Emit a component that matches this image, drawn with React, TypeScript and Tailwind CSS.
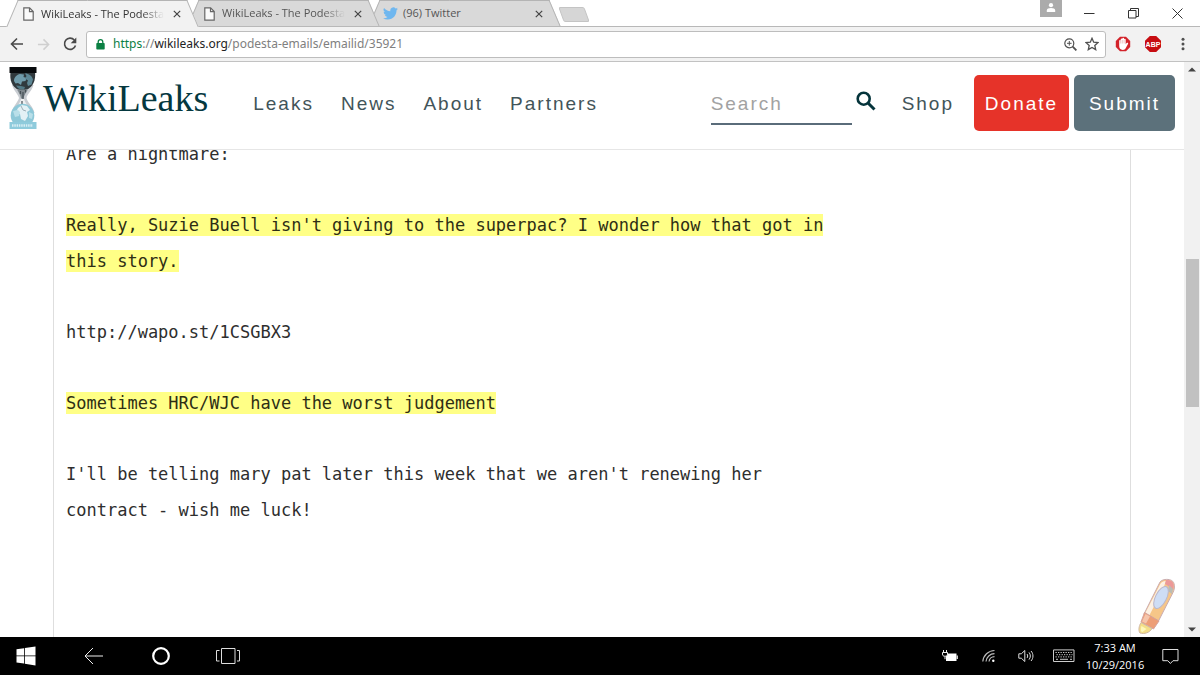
import type { ReactNode } from "react";

type TabProps = { title: string; icon: ReactNode; active?: boolean; fade?: boolean; layer: string };

function PageIcon() {
  return (
    <svg viewBox="0 0 11 14" className="h-[14px] w-[11px]" fill="none" stroke="#666" strokeWidth="1.2" aria-hidden="true">
      <path d="M.8.8h5.8l3.6 3.7v8.7H.8z" fill="#fafafa" />
      <path d="M6.5 1v3.6h3.6" />
    </svg>
  );
}

function TwitterIcon() {
  return (
    <svg viewBox="0 0 24 24" className="h-[15px] w-[15px]" fill="#6fb7ef" aria-hidden="true">
      <path d="M23.95 4.57a10 10 0 0 1-2.82.77 4.96 4.96 0 0 0 2.16-2.72c-.95.55-2 .95-3.13 1.18a4.92 4.92 0 0 0-8.38 4.48C7.69 8.1 4.07 6.13 1.64 3.16a4.92 4.92 0 0 0 1.52 6.57 4.9 4.9 0 0 1-2.23-.61v.06a4.92 4.92 0 0 0 3.95 4.83 5 5 0 0 1-2.21.08 4.94 4.94 0 0 0 4.6 3.42A9.87 9.87 0 0 1 0 19.54a13.99 13.99 0 0 0 7.55 2.21c9.05 0 14-7.5 14-13.98l-.02-.64a9.94 9.94 0 0 0 2.42-2.56z" />
    </svg>
  );
}

function Tab({ title, icon, active, fade, layer }: TabProps) {
  const fill = active
    ? "h-[27px] before:bg-[#f2f2f2] after:bg-[#f2f2f2]"
    : "h-[26px] before:bg-[#d9d9d9] after:bg-[#d9d9d9]";
  return (
    <div
      className={`relative isolate -ml-3 w-[193px] shrink-0 before:absolute before:inset-y-0 before:left-[6px] before:-z-10 before:w-[100px] before:-skew-x-[23deg] before:border-t before:border-l before:border-[#b4b4b4] before:content-[''] after:absolute after:inset-y-0 after:right-[6px] after:-z-10 after:w-[100px] after:skew-x-[23deg] after:border-t after:border-r after:border-[#b4b4b4] after:content-[''] ${fill} ${layer}`}
    >
      <div className="flex h-full items-center pt-px pr-[18px] pl-[14px]">
        <button className="flex min-w-0 flex-1 items-center gap-[5px] text-left">
          <span className="flex w-4 shrink-0 justify-center">{icon}</span>
          <span
            className={`text-[11px] whitespace-nowrap ${active ? "text-[#333]" : "text-[#555]"} ${fade ? "[mask-image:linear-gradient(to_right,black_82%,transparent)]" : ""}`}
          >
            {title}
          </span>
        </button>
        <button aria-label={`Close ${title}`} className="shrink-0">
          <svg viewBox="0 0 8 8" className="h-[8px] w-[8px]" stroke="#444" strokeWidth="1.2" aria-hidden="true">
            <path d="M.8.8l6.4 6.4M7.2.8L.8 7.2" />
          </svg>
        </button>
      </div>
    </div>
  );
}

function TabStrip() {
  return (
    <div className="flex h-[27px] border-b border-[#b8b8b8] bg-white pl-[18px]">
      <Tab title="WikiLeaks - The Podesta" icon={<PageIcon />} active fade layer="z-30" />
      <Tab title="WikiLeaks - The Podesta" icon={<PageIcon />} fade layer="z-20" />
      <Tab title="(96) Twitter" icon={<TwitterIcon />} layer="z-10" />
      <button aria-label="New tab" className="mt-[7px] h-[15px] w-[26px] shrink-0 skew-x-[20deg] rounded-[2px] border border-[#c4c4c4] bg-[#d6d6d6]" />
      <div className="ml-auto flex">
        <button aria-label="Profile" className="flex h-[17px] w-[22px] justify-center bg-[#ababab] pt-[3px]">
          <svg viewBox="0 0 10 9" className="h-[9px] w-[10px]" fill="#fff" aria-hidden="true">
            <circle cx="5" cy="2.2" r="2.1" />
            <path d="M.8 9V7.4C.8 5.8 2.8 5 5 5s4.2.8 4.2 2.4V9z" />
          </svg>
        </button>
        <div className="flex h-[26px] items-center gap-[33px] pr-[17px] pl-[22px]">
          <button aria-label="Minimize">
            <svg viewBox="0 0 11 11" className="h-[11px] w-[11px]" stroke="#333" aria-hidden="true"><path d="M0 5.5h10.5" /></svg>
          </button>
          <button aria-label="Restore">
            <svg viewBox="0 0 11 11" className="h-[11px] w-[11px]" fill="none" stroke="#333" aria-hidden="true">
              <path d="M.5 2.5h7.500v7.500h-7.500zM2.500 2.500v-2h8v8h-2.500" />
            </svg>
          </button>
          <button aria-label="Close window">
            <svg viewBox="0 0 11 11" className="h-[11px] w-[11px]" stroke="#333" aria-hidden="true"><path d="M.5.5l10 10M10.500.5l-10 10" /></svg>
          </button>
        </div>
      </div>
    </div>
  );
}

function Toolbar() {
  return (
    <div className="flex h-[35px] items-center border-b border-[#c2c2c2] bg-[#f2f2f2] pl-[10px]">
      <div className="flex w-[76px] shrink-0 items-center gap-[13px]">
        <button aria-label="Back">
          <svg viewBox="0 0 14 14" className="h-[14px] w-[14px]" fill="none" stroke="#4a4a4a" strokeWidth="1.6" aria-hidden="true"><path d="M13 7H1.500M7 1.500L1.500 7 7 12.500" /></svg>
        </button>
        <button aria-label="Forward" disabled>
          <svg viewBox="0 0 14 14" className="h-[13px] w-[13px]" fill="none" stroke="#cfcfcf" strokeWidth="1.6" aria-hidden="true"><path d="M1 7h11.500M7 1.500L12.500 7 7 12.500" /></svg>
        </button>
        <button aria-label="Reload">
          <svg viewBox="0 0 14 14" className="h-[14px] w-[14px]" fill="none" aria-hidden="true">
            <path d="M11.300 3A5.600 5.600 0 1 0 12.500 8.400" stroke="#4a4a4a" strokeWidth="1.6" />
            <path d="M13.300.6v5.600H7.700z" fill="#4a4a4a" />
          </svg>
        </button>
      </div>
      <div className="flex h-[27px] min-w-0 flex-1 items-center rounded-[3px] border border-[#bdbdbd] bg-white px-[9px]">
        <svg viewBox="0 0 9 11" className="mr-[8px] h-[11px] w-[9px] shrink-0" aria-hidden="true">
          <rect x=".3" y="4" width="8.400" height="6.500" rx=".8" fill="#0b8043" />
          <path d="M2.200 4.500V3a2.300 2.300 0 0 1 4.600 0v1.500" fill="none" stroke="#0b8043" strokeWidth="1.300" />
        </svg>
        <div className="flex-1 font-['Noto_Sans','Open_Sans',sans-serif] text-[12px] whitespace-nowrap text-[#808080]">
          <span className="text-[#0b8043]">https</span>://<span className="text-[#222]">wikileaks.org</span>/podesta-emails/emailid/35921
        </div>
        <div className="flex items-center gap-2">
          <button aria-label="Zoom level">
            <svg viewBox="0 0 13 13" className="h-[13px] w-[13px]" fill="none" stroke="#505050" aria-hidden="true">
              <circle cx="5.300" cy="5.300" r="4.500" strokeWidth="1.200" />
              <path d="M3 5.300h4.600M5.300 3v4.600" />
              <path d="M8.700 8.700l3.700 3.700" strokeWidth="1.800" />
            </svg>
          </button>
          <button aria-label="Bookmark this page" className="-mr-[3px]">
            <svg viewBox="0 0 14 14" className="h-[14px] w-[14px]" fill="none" stroke="#505050" strokeWidth="1.300" aria-hidden="true">
              <path d="M7 1.300l1.700 3.900 4.300.4-3.200 2.800.9 4.200L7 10.400l-3.700 2.200.9-4.200L1 5.600l4.300-.4z" />
            </svg>
          </button>
        </div>
      </div>
      <div className="flex shrink-0 items-center pr-[15px] pl-[9px]">
        <button aria-label="Ad blocker">
          <svg viewBox="0 0 16 16" className="h-[16px] w-[16px]" aria-hidden="true">
            <path d="M5 .8h6L15.200 5v6L11 15.200H5L.8 11V5z" fill="#d3222a" />
            <path d="M4.200 8.500V4.700c0-1.100 1.500-1.100 1.500 0V3.300c0-1.200 1.600-1.200 1.600 0V2.600c0-1.200 1.800-1.200 1.800 0v1c0-1.200 1.600-1.200 1.600 0v4.700l.9-1.200c.8-.9 2-.2 1.400.8l-2.500 4.700c-.6 1-1.300 1.400-2.600 1.400-2.700 0-3.700-1.600-3.700-3.900z" fill="#fff" />
            <path d="M5.700 4.500v3M7.300 4v3.500M9.100 4v3.500" stroke="#dc8c8f" strokeWidth=".5" />
          </svg>
        </button>
        <button aria-label="Adblock Plus" className="ml-[14px]">
          <span className="flex h-[16px] w-[16px] items-center justify-center bg-[#c70d12] font-['Liberation_Sans',Arial,sans-serif] text-[7px] leading-none font-bold text-white [clip-path:polygon(30%_0,70%_0,100%_30%,100%_70%,70%_100%,30%_100%,0_70%,0_30%)]">
            ABP
          </span>
        </button>
        <button aria-label="Menu" className="ml-[20px]">
          <svg viewBox="0 0 4 14" className="h-[14px] w-[4px]" fill="#505050" aria-hidden="true">
            <circle cx="2" cy="2.200" r="1.500" /><circle cx="2" cy="7" r="1.500" /><circle cx="2" cy="11.800" r="1.500" />
          </svg>
        </button>
      </div>
    </div>
  );
}

function Hourglass() {
  return (
    <svg viewBox="0 0 28 62" className="h-[62px] w-[28px] shrink-0" aria-hidden="true">
      <path d="M3 18c2 6 6 9 7 13-1 4-6 8-7.500 15h23C24 39 18 35 17.500 31c.5-4 5.500-7 7-13z" fill="#c9cdd2" />
      <path d="M12 32h3c1 4 5 8 6 12l-8 6-7-4c0-5 5-9 6-14z" fill="#eef0f1" />
      <path d="M1.500 5h24.500c1 8-2 15-8 17.500-3 1-6 1-9 0C3 20 .5 13 1.500 5z" fill="#30393d" />
      <path d="M5 14c0-4 3-6.500 6-7l4 .5-.5 2.500 3 1-1 3-3.500.5-1 3.500-3-2-2.500.5z" fill="#6f9baa" />
      <path d="M16 6.500c4 0 7 2.500 8 6l-1.500 5-3.500 1.500-1-3 1-2.500-3-2 1.500-2.500z" fill="#5d8795" />
      <path d="M7 18.500l5 .5 4 1-1 2.500c-3 .5-6-.5-8-4z" fill="#527985" />
      <path d="M8 22.500c1.500 3 3.500 5 4 9h2.500c.5-3 2.500-6 4.500-9z" fill="#7d868c" />
      <path d="M11.500 24v3M14 25v7M13 34v4M16.500 23v2.500" stroke="#454f55" strokeWidth="1.200" />
      <circle cx="13.500" cy="48.500" r="11.800" fill="#8ec8d8" />
      <path d="M13 38l5 1 3 4-3 2 1 4-3 5-4-2-1-5-4-2 2-4z" fill="#e3f1f5" />
      <path d="M4 44l5-1 2 2-1 4-4 1zM20 45l4 2-1 5-3-1z" fill="#b9dfe9" />
      <path d="M12 39l2 4 3 1" fill="none" stroke="#9fb0b8" />
      <rect x=".5" y="0" width="27" height="6" fill="#080b0d" />
      <rect x=".5" y="55" width="27" height="7" fill="#8fcbdc" />
      <path d="M3 58.500h21" stroke="#d8eef4" strokeWidth="2.500" strokeDasharray="1.500 .8" />
    </svg>
  );
}

function SiteHeader() {
  return (
    <header className="relative z-10 flex h-[88px] shrink-0 border-b border-[#e6e6e6] bg-white pl-[9px] font-['Liberation_Sans',Arial,sans-serif] text-[19px] tracking-[2px] text-[#425459]">
      <a href="#home" className="mt-[5px] flex h-[62px] items-center gap-[6px] font-['Liberation_Serif',Georgia,serif] text-[38px] tracking-normal text-[#05383f]">
        <Hourglass />
        WikiLeaks
      </a>
      <nav className="mt-[13px] ml-[45px] flex h-[56px] items-center gap-[27px] pt-[2px]">
        <a href="#leaks">Leaks</a>
        <a href="#news">News</a>
        <a href="#about">About</a>
        <a href="#partners">Partners</a>
      </nav>
      <div className="mt-[13px] ml-auto flex h-[56px] items-center pr-[9px]">
        <input
          type="search"
          aria-label="Search"
          placeholder="Search"
          className="h-[50px] w-[141px] self-start border-b-2 border-[#5a6c7a] bg-transparent pt-[9px] tracking-[2px] outline-none placeholder:text-[#a2a2a2]"
        />
        <button aria-label="Search" className="mb-[5px] ml-[4px]">
          <svg viewBox="0 0 20 20" className="h-[20px] w-[20px]" fill="none" stroke="#05343b" aria-hidden="true">
            <circle cx="7.700" cy="7.700" r="6" strokeWidth="2.600" />
            <path d="M12 12l6.500 6.500" strokeWidth="3" />
          </svg>
        </button>
        <a href="#shop" className="ml-[26px] pt-[2px]">Shop</a>
        <a href="#donate" className="ml-[20px] flex h-full w-[95px] items-center justify-center rounded-[5px] bg-[#e63329] pt-[2px] text-white">Donate</a>
        <a href="#submit" className="ml-[5px] flex h-full w-[101px] items-center justify-center rounded-[5px] bg-[#5c717b] pt-[2px] text-white">Submit</a>
      </div>
    </header>
  );
}

function Email() {
  return (
    <article className="mx-[53px] min-h-0 flex-1 overflow-hidden border-x border-[#dedede] pl-[12px]">
      <div className="-mt-[14px] flex max-w-[780px] flex-col gap-[35px] font-['DejaVu_Sans_Mono',monospace] text-[17px] leading-9 text-[#2e2e2e]">
        <p>Are a nightmare:</p>
        <p><mark className="bg-[#ffff86] py-px text-[#2e2e14]">Really, Suzie Buell isn't giving to the superpac? I wonder how that got in this story.</mark></p>
        <p>http://wapo.st/1CSGBX3</p>
        <p><mark className="bg-[#ffff86] py-px text-[#2e2e14]">Sometimes HRC/WJC have the worst judgement</mark></p>
        <p>I'll be telling mary pat later this week that we aren't renewing her contract - wish me luck!</p>
      </div>
    </article>
  );
}

function Highlighter() {
  return (
    <button aria-label="Highlighter" className="absolute right-[8px] bottom-[2px] opacity-90">
      <svg viewBox="0 0 39 57" className="h-[57px] w-[39px]" aria-hidden="true">
        <g strokeLinejoin="round">
          <path d="M22 6c1-3 3-4 6-4.500 4-.5 8 .5 9 4 .8 3 .5 6-1 9L21 44 7 36z" fill="#f6c07c" stroke="#c3a2a8" />
          <path d="M23 6.500c1-2 3-3.500 6-3.500l-3 8L12 38l-4-2.500z" fill="#fdf0e0" />
          <path d="M29 2c4-.3 7 1 7.500 4 .3 2 .2 4-.5 6l-3-3-5-3z" fill="#eb8f8e" />
          <path d="M32 7l4 4-1 5-4-3z" fill="#b3b5ae" />
          <path d="M7.500 34.500L22 43l-5.500 8L4 44z" fill="#ec9468" stroke="#cf9a93" />
          <path d="M8.500 36l4.500 2.500-4 7-4-2z" fill="#f6bfa2" />
          <path d="M4 44.500l11 6c-2 4-8 6-12 4.500-2-2.500-1-7 1-10.500z" fill="#f3db7b" stroke="#ccb09a" />
          <path d="M4.500 48l5 3-4 3c-2 0-2-3-1-6z" fill="#fdf7b4" />
          <ellipse cx="24" cy="19.500" rx="5.500" ry="12" transform="rotate(27 24 19.500)" fill="#c9daf5" stroke="#b4b0c6" />
        </g>
      </svg>
    </button>
  );
}

function ScrollBar() {
  return (
    <div className="flex w-[16px] shrink-0 flex-col items-center bg-[#f1f1f1] py-[5px]">
      <svg viewBox="0 0 8 5" className="h-[5px] w-[8px]" fill="#444" aria-hidden="true"><path d="M0 4.500L4 .5l4 4z" /></svg>
      <div className="flex w-full flex-1 flex-col items-center">
        <div className="grow-[187]" />
        <div className="w-[13px] grow-[149] bg-[#c1c1c1]" />
        <div className="grow-[220]" />
      </div>
      <svg viewBox="0 0 8 5" className="h-[5px] w-[8px]" fill="#444" aria-hidden="true"><path d="M0 .5l4 4 4-4z" /></svg>
    </div>
  );
}

function Taskbar() {
  return (
    <footer className="flex h-[38px] shrink-0 items-center justify-between bg-black text-white">
      <div className="flex items-center pl-[16px]">
        <button aria-label="Start">
          <svg viewBox="0 0 20 20" className="h-[20px] w-[20px]" fill="#fff" aria-hidden="true">
            <path d="M.5 3.200l7.500-1v7.300H.5zM8.800 2.100L19.500.6v8.900H8.800zM.5 10.300H8v7.300l-7.500-1zM8.800 10.300h10.700v9.100L8.800 17.800z" />
          </svg>
        </button>
        <button aria-label="Back" className="ml-[48px]">
          <svg viewBox="0 0 20 18" className="h-[18px] w-[20px]" fill="none" stroke="#eee" aria-hidden="true"><path d="M19 9H1M9 1L1 9l8 8" /></svg>
        </button>
        <button aria-label="Cortana" className="ml-[47px]">
          <svg viewBox="0 0 20 20" className="h-[20px] w-[20px]" fill="none" stroke="#fff" strokeWidth="2.200" aria-hidden="true"><circle cx="10" cy="10" r="7.800" /></svg>
        </button>
        <button aria-label="Task view" className="ml-[45px]">
          <svg viewBox="0 0 24 16" className="h-[16px] w-[24px]" fill="none" stroke="#ddd" aria-hidden="true">
            <path d="M5.500.5h13.500v15H5.500zM3.500 2.500h-3v10.500h3M21 2.500h2.500v10.500H21" />
          </svg>
        </button>
      </div>
      <div className="flex items-center pr-[21px]">
        <svg viewBox="0 0 16 12" className="h-[12px] w-[16px]" role="img" aria-label="Battery charging">
          <path d="M4 3.500h10.500v7.500H4z" fill="#fff" />
          <path d="M14.500 5.500h1.500v3.500h-1.500z" fill="#ccc" />
          <path d="M.5 2.500h5v1.500c0 1.500-.8 2.200-2 2.200h-1C1.300 6.200.5 5.500.5 4zM1.500 0v2.500M4.500 0v2.500M3 6.200v3" stroke="#eee" fill="#000" />
        </svg>
        <svg viewBox="0 0 14 14" className="ml-[24px] h-[14px] w-[14px]" fill="none" stroke="#bbb" strokeWidth="1.200" role="img" aria-label="Wi-Fi">
          <path d="M.8 12.500A12 12 0 0 1 12.500 1.500M4 12.500a8.500 8.500 0 0 1 8.500-7.800M7 12.500a5.500 5.500 0 0 1 5.500-4.800" />
          <circle cx="11.300" cy="11.800" r="1.200" fill="#fff" stroke="none" />
        </svg>
        <svg viewBox="0 0 16 14" className="ml-[22px] h-[14px] w-[16px]" fill="none" stroke="#ddd" role="img" aria-label="Volume">
          <path d="M.8 4.800h2.500L6.800 1.500v11L3.300 9.200H.8zM9 5c.9 1 .9 3 0 4M11 3.400c1.800 2 1.800 5.200 0 7.200M13 2c2.600 2.800 2.600 7.200 0 10" />
        </svg>
        <svg viewBox="0 0 22 14" className="ml-[19px] h-[14px] w-[22px]" fill="none" stroke="#ccc" role="img" aria-label="Touch keyboard">
          <path d="M.5.9h20.500v11.600H.5z" />
          <path d="M2.500 3.500h17M3.500 5.700h16M2.500 7.900h17" strokeDasharray="1.300 1.200" />
          <path d="M3 10.300h2M7 10.300h8M17 10.300h2" />
        </svg>
        <div className="ml-[9px] w-[62px] text-center text-[11px] leading-[17px] whitespace-nowrap">
          <div>7:33 AM</div>
          <div>10/29/2016</div>
        </div>
        <button aria-label="Notifications" className="ml-[16px]">
          <svg viewBox="0 0 17 17" className="h-[17px] w-[17px]" fill="none" stroke="#ddd" aria-hidden="true"><path d="M.8 1.500h15.200v11.200H11L8.400 15.500 5.800 12.700h-5z" /></svg>
        </button>
      </div>
    </footer>
  );
}

export default function App() {
  return (
    <div className="flex h-screen flex-col overflow-hidden bg-white font-['Open_Sans','Noto_Sans',sans-serif]">
      <TabStrip />
      <Toolbar />
      <div className="flex min-h-0 flex-1">
        <main className="relative flex min-w-0 flex-1 flex-col">
          <SiteHeader />
          <Email />
          <Highlighter />
        </main>
        <ScrollBar />
      </div>
      <Taskbar />
    </div>
  );
}
